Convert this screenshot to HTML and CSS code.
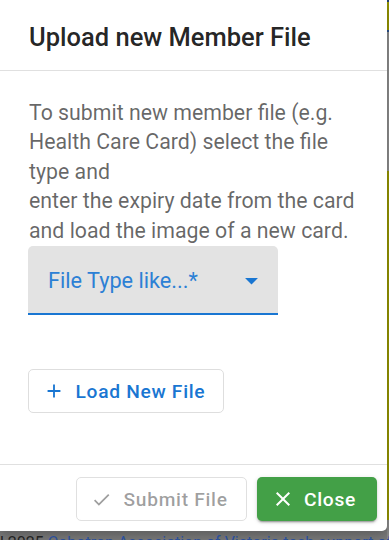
FILE: index.html
```html
<!DOCTYPE html>
<html>
<head>
<meta charset="utf-8">
<link rel="stylesheet" href="styles.css">
</head>
<body>
<div class="dialog">
  <div class="dialog-title">Upload new Member File</div>
  <div class="dialog-content">
    <p class="intro">To submit new member file (e.g.<br>Health Care Card) select the file<br>type and<br>enter the expiry date from the card<br>and load the image of a new card.</p>
    <div class="select">
      <span class="select-label">File Type like...*</span>
      <svg class="select-arrow" viewBox="0 0 24 24" width="31" height="31"><path d="M7 10l5 5 5-5z" fill="#1976d2"/></svg>
    </div>
    <button class="btn btn-outlined">
      <svg class="btn-icon" viewBox="0 0 24 24" width="22" height="22"><path d="M19 13h-6v6h-2v-6H5v-2h6V5h2v6h6v2z" fill="currentColor"/></svg>
      <span>Load New File</span>
    </button>
  </div>
  <div class="dialog-actions">
    <button class="btn btn-disabled">
      <svg class="btn-icon" viewBox="0 0 24 24" width="21" height="21"><path d="M9 16.17 4.83 12l-1.42 1.41L9 19 21 7l-1.41-1.41z" fill="currentColor"/></svg>
      <span>Submit File</span>
    </button>
    <button class="btn btn-success">
      <svg class="btn-icon" viewBox="0 0 24 24" width="24" height="24"><path d="M19 6.41 17.59 5 12 10.59 6.41 5 5 6.41 10.59 12 5 17.59 6.41 19 12 13.41 17.59 19 19 17.59 13.41 12z" fill="currentColor"/></svg>
      <span>Close</span>
    </button>
  </div>
</div>
<div class="page-footer"><span class="dark">l 2025</span> <span class="link">Cobotron Association of Victoria tech support office</span></div>
</body>
</html>
```
FILE: styles.css
```css
html, body {
  margin: 0;
  padding: 0;
}
body {
  width: 389px;
  height: 540px;
  overflow: hidden;
  font-family: Roboto, "Noto Sans", sans-serif;
  background:
    linear-gradient(to bottom, #23406f 0 2px, #949400 2px 30px, #2a4f8a 30px 32px, #8c8c8c 32px 171px, #949400 171px 520px, #8a8a8a 520px) right top / 2px 100% no-repeat,
    linear-gradient(to bottom, #6a6a6a, #7a7a7a);
}
.dialog {
  width: 387px;
  height: 531px;
  background: #fff;
  border-radius: 0 0 5px 0;
  box-shadow: 0 4px 12px rgba(0,0,0,0.25);
  display: flex;
  flex-direction: column;
  box-sizing: border-box;
}
.dialog-title {
  font-size: 25.5px;
  font-weight: 500;
  line-height: 32px;
  color: rgba(0,0,0,0.87);
  padding: 21px 10px 17px 29px;
  border-bottom: 1px solid #e0e0e0;
  white-space: nowrap;
}
.dialog-content {
  flex: 1;
  padding: 26.5px 10px 0 28px;
  display: flex;
  flex-direction: column;
  align-items: flex-start;
}
.intro {
  margin: 0 0 0 1px;
  font-size: 21.3px;
  line-height: 29.5px;
  color: rgba(0,0,0,0.6);
  white-space: nowrap;
}
.select {
  margin-top: 1px;
  width: 250px;
  height: 69px;
  box-sizing: border-box;
  background: #e3e3e3;
  border-radius: 5px 5px 0 0;
  border-bottom: 2px solid #1976d2;
  display: flex;
  align-items: center;
  justify-content: space-between;
  padding: 2px 11px 0 20px;
}
.select-label {
  font-size: 21.7px;
  color: #2c80d5;
}
.select-arrow {
  display: block;
}
.btn {
  font-family: Roboto, "Noto Sans", sans-serif;
  font-size: 19.2px;
  font-weight: 500;
  letter-spacing: 0.7px;
  height: 44px;
  box-sizing: border-box;
  border-radius: 5px;
  display: inline-flex;
  align-items: center;
  cursor: pointer;
  white-space: nowrap;
}
.btn-icon {
  display: block;
  flex-shrink: 0;
}
.btn-outlined {
  margin-top: 54px;
  width: 196px;
  background: #fff;
  border: 1px solid #dedede;
  color: #1976d2;
  padding: 0 0 0 14px;
  gap: 10.5px;
}
.dialog-actions {
  border-top: 1px solid #e0e0e0;
  padding: 12px 10px 10px 24px;
  display: flex;
  justify-content: flex-end;
  gap: 10px;
}
.btn-disabled {
  width: 171px;
  background: #fff;
  border: 1px solid #e0e0e0;
  color: rgba(0,0,0,0.38);
  padding: 0 0 0 13.5px;
  gap: 12px;
}
.btn-success {
  width: 120px;
  border: none;
  background: #43a047;
  color: #fff;
  padding: 0 0 0 14px;
  gap: 9px;
  box-shadow: 0 3px 1px -2px rgba(0,0,0,0.2), 0 2px 2px 0 rgba(0,0,0,0.14), 0 1px 5px 0 rgba(0,0,0,0.12);
}
.page-footer {
  margin-top: 3px;
  font-size: 16px;
  line-height: 18px;
  white-space: nowrap;
  color: #222;
}
.page-footer .link {
  color: #2b4f9a;
}
```
